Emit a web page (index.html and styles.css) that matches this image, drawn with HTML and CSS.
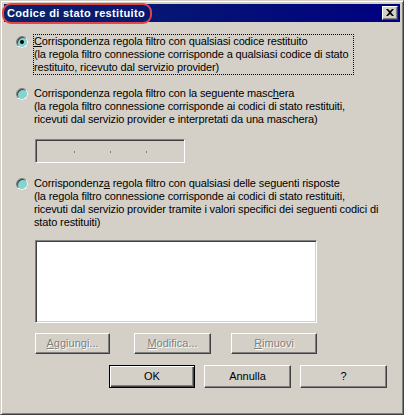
FILE: index.html
```html
<!DOCTYPE html>
<html>
<head>
<meta charset="utf-8">
<link rel="stylesheet" href="styles.css">
</head>
<body>
<div class="window">
  <div class="titlebar">
    <span class="title">Codice di stato restituito</span>
    <span class="mark"></span>
    <div class="closebtn">
      <svg width="8" height="7" viewBox="0 0 8 7"><path d="M0 0h2l2 2 2-2h2L5 3.5 8 7H6L4 5 2 7H0l3-3.5z" fill="#000"/></svg>
    </div>
  </div>
  <div class="content">
    <div class="option opt1">
      <span class="radio checked"><span class="dot"></span></span>
      <div class="label focus"><u>C</u>orrispondenza regola filtro con qualsiasi codice restituito<br>(la regola filtro connessione corrisponde a qualsiasi codice di stato<br>restituito, ricevuto dal servizio provider)</div>
    </div>
    <div class="option opt2">
      <span class="radio"></span>
      <div class="label">Corrispondenza regola filtro con la seguente masc<u>h</u>era<br>(la regola filtro connessione corrisponde ai codici di stato restituiti,<br>ricevuti dal servizio provider e interpretati da una maschera)</div>
    </div>
    <div class="ipbox">
      <span class="seg"></span><span class="ipdot"></span><span class="seg"></span><span class="ipdot"></span><span class="seg"></span><span class="ipdot"></span><span class="seg"></span>
    </div>
    <div class="option opt3">
      <span class="radio"></span>
      <div class="label">Corrispondenz<u>a</u> regola filtro con qualsiasi delle seguenti risposte<br>(la regola filtro connessione corrisponde ai codici di stato restituiti,<br>ricevuti dal servizio provider tramite i valori specifici dei seguenti codici di<br>stato restituiti)</div>
    </div>
    <div class="listbox"></div>
    <div class="btnrow1">
      <div class="btn disabled b-add"><span><u>A</u>ggiungi...</span></div>
      <div class="btn disabled b-mod"><span><u>M</u>odifica...</span></div>
      <div class="btn disabled b-rem"><span><u>R</u>imuovi</span></div>
    </div>
    <div class="btnrow2">
      <div class="btn default">OK</div>
      <div class="btn">Annulla</div>
      <div class="btn">?</div>
    </div>
  </div>
</div>
</body>
</html>
```
FILE: styles.css
```css
* { box-sizing: border-box; }
html, body { margin: 0; padding: 0; background: #d4d0c8; }
body { width: 404px; height: 415px; overflow: hidden; font-family: "Liberation Sans", Arial, sans-serif; font-size: 11px; color: #000; }

.window {
  width: 404px; height: 415px;
  background: #d4d0c8;
  border-top: 1px solid #d4d0c8; border-left: 1px solid #d4d0c8;
  border-right: 1px solid #404040; border-bottom: 1px solid #404040;
  box-shadow: inset 1px 1px 0 #fff, inset -1px -1px 0 #808080;
  padding: 3px;
  display: flex; flex-direction: column;
  position: relative;
}

.titlebar {
  height: 18px;
  background: linear-gradient(to right, #0a246a, #000080);
  display: flex; align-items: center;
  padding-left: 3px; padding-right: 2px;
  position: relative;
}
.title { color: #fff; font-weight: bold; font-size: 11px; flex: 1; letter-spacing: 0.35px; }
.mark {
  position: absolute; left: -2px; top: -1px; width: 150px; height: 21px;
  border: 2px solid #e64545; border-radius: 9px;
}
.closebtn {
  width: 16px; height: 14px; background: #d4d0c8;
  border-top: 1px solid #fff; border-left: 1px solid #fff;
  border-right: 1px solid #404040; border-bottom: 1px solid #404040;
  box-shadow: inset -1px -1px 0 #808080;
  display: flex; align-items: center; justify-content: center;
  padding: 0 1px 1px 0;
}
.closebtn svg { display: block; }

.content { padding-left: 12px; display: flex; flex-direction: column; }

.option { display: flex; align-items: flex-start; }
.opt1 { margin-top: 12px; }
.opt2 { margin-top: 11px; }
.opt3 { margin-top: 13px; }
.label {
  line-height: 13px; border: 1px solid transparent; margin-left: 5px; white-space: nowrap;
  letter-spacing: -0.13px;
}
.label.focus { border: 1px dotted #000; width: 321px; }

.radio {
  width: 12px; height: 12px; border-radius: 50%; margin-top: 2px;
  background: #82d6d0;
  border: 1px solid #808080;
  box-shadow: inset 1px 1px 0 #404040;
  position: relative; flex: none;
  display: flex; align-items: center; justify-content: center;
}
.radio::after {
  content: ""; position: absolute; inset: -1px; border-radius: 50%;
  border: 1px solid transparent; border-right-color: #fff; border-bottom-color: #fff;
}
.dot { width: 4px; height: 4px; border-radius: 50%; background: #000; }

.ipbox {
  margin-top: 12px; margin-left: 19px;
  width: 150px; height: 24px;
  border-top: 1px solid #808080; border-left: 1px solid #808080;
  border-right: 1px solid #fff; border-bottom: 1px solid #fff;
  box-shadow: inset 1px 1px 0 #404040, inset -1px -1px 0 #d4d0c8;
  display: flex; align-items: center; padding: 0 2px 0 3px;
}
.seg { flex: 1; }
.ipdot { width: 1px; height: 2px; background: #808080; margin-top: 2px; }

.listbox {
  margin-top: 10px; margin-left: 19px;
  width: 282px; height: 83px; background: #fff;
  border-top: 1px solid #808080; border-left: 1px solid #808080;
  border-right: 1px solid #fff; border-bottom: 1px solid #fff;
  box-shadow: inset 1px 1px 0 #404040, inset -1px -1px 0 #d4d0c8;
}

.btn {
  background: #d4d0c8; height: 23px; width: 87px;
  border-top: 1px solid #fff; border-left: 1px solid #fff;
  border-right: 1px solid #404040; border-bottom: 1px solid #404040;
  box-shadow: inset -1px -1px 0 #808080;
  display: flex; align-items: center; justify-content: center;
  padding-bottom: 1px;
}
.btn.disabled { color: #808080; text-shadow: 1px 1px 0 #fff; height: 21px; }
.btnrow1 { display: flex; margin-top: 10px; margin-left: 19px; }
.b-add { width: 75px; }
.b-mod { width: 77px; margin-left: 24px; }
.b-rem { width: 86px; margin-left: 20px; }
.btnrow2 { display: flex; margin-top: 11px; margin-left: 93px; gap: 9px; }
.btn.default {
  width: 86px;
  border: 1px solid #000;
  box-shadow: inset 1px 1px 0 #fff, inset -1px -1px 0 #404040, inset -2px -2px 0 #808080;
}
```
